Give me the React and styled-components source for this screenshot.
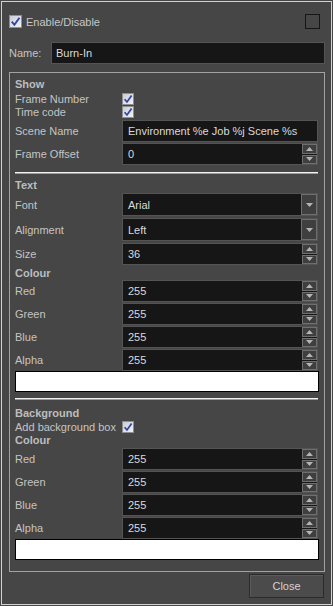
import React from "react";
import styled, { createGlobalStyle } from "styled-components";

const GlobalStyle = createGlobalStyle`
  html, body { margin: 0; padding: 0; background: #464646; }
  body { font-family: "Liberation Sans", Arial, sans-serif; font-size: 11px; color: #c4c4c4; }
  * { box-sizing: border-box; }
`;

const Window = styled.div`
  width: 333px;
  height: 606px;
  padding: 1px;
  background: #464646;
`;

const Frame = styled.div`
  height: 100%;
  border: 1px solid #d2d2d2;
  padding: 0 6px 0 7px;
  display: flex;
  flex-direction: column;
`;

const TopRow = styled.div`
  margin-top: 12px;
  height: 15px;
  display: flex;
  align-items: center;
  justify-content: space-between;
  padding-right: 5px;
`;

const CheckLabel = styled.label`
  display: flex;
  align-items: center;
  gap: 4px;
  font-size: 11px;
  color: #c6c6c6;
`;

const EmptyBox = styled.div`
  width: 15px;
  height: 15px;
  border: 1px solid #161616;
`;

const BoxWrap = styled.span`
  display: inline-flex;
  width: ${(p) => p.$size}px;
  height: ${(p) => p.$size}px;
  border: 1px solid #8e8e8e;
  background: linear-gradient(135deg, #c9cbd8 0%, #f2f2f4 100%);
  align-items: center;
  justify-content: center;
`;

const Check = ({ size = 12 }) => (
  <BoxWrap $size={size}>
    <svg width={size - 2} height={size - 2} viewBox="0 0 10 10">
      <path d="M1.6 5.2 L4 8 L8.6 1.6" fill="none" stroke="#2f43a3" strokeWidth="1.7" />
    </svg>
  </BoxWrap>
);

const NameRow = styled.div`
  margin-top: 13px;
  display: flex;
  align-items: center;
  height: 22px;
`;

const NameLabel = styled.span`
  width: 42px;
  color: #c4c4c4;
`;

const TextBox = styled.div`
  flex: 1;
  height: 100%;
  background: #161616;
  border: 1px solid #545454;
  color: #dadada;
  display: flex;
  align-items: center;
  padding-left: 4px;
  font-size: 11px;
`;

const GroupBox = styled.div`
  margin-top: 8px;
  border: 1px solid #a2a2a2;
  padding: 4px 6px 11px 5px;
  display: flex;
  flex-direction: column;
`;

const Title = styled.div`
  height: 14px;
  line-height: 14px;
  font-weight: bold;
  color: #bdbdbd;
  margin-top: ${(p) => p.$mt || 0}px;
`;

const CheckRow = styled.div`
  height: 13px;
  display: flex;
  align-items: center;
  margin-top: ${(p) => p.$mt || 0}px;
`;

const RowLabel = styled.span`
  width: 107px;
  flex: none;
  color: #c4c4c4;
  white-space: nowrap;
`;

const FieldRow = styled.div`
  height: ${(p) => p.$h || 22}px;
  display: flex;
  align-items: stretch;
  margin-top: ${(p) => p.$mt || 0}px;
`;

const FieldLabel = styled.span`
  width: 107px;
  flex: none;
  color: #c4c4c4;
  display: flex;
  align-items: center;
`;

const Field = styled.div`
  flex: 1;
  display: flex;
  background: #161616;
  border: 1px solid #545454;
`;

const FieldText = styled.div`
  flex: 1;
  display: flex;
  align-items: center;
  padding-left: 5px;
  color: #dadada;
`;

const SpinCol = styled.div`
  width: 15px;
  display: flex;
  flex-direction: column;
  gap: 1px;
  background: #161616;
`;

const SpinBtn = styled.div`
  flex: 1;
  border: 1px solid #6f6f6f;
  background: #3f3f3f;
  display: flex;
  align-items: center;
  justify-content: center;
`;

const DropBtn = styled.div`
  width: 16px;
  border: 1px solid #6f6f6f;
  background: #3f3f3f;
  display: flex;
  align-items: center;
  justify-content: center;
`;

const Tri = ({ up }) => (
  <svg width="7" height="4" viewBox="0 0 7 4">
    <path d={up ? "M0 4 L3.5 0 L7 4 Z" : "M0 0 L7 0 L3.5 4 Z"} fill="#b4b4b4" />
  </svg>
);

const Separator = styled.div`
  height: 2px;
  margin-top: ${(p) => p.$mt || 0}px;
  border-top: 1px solid #f2f2f2;
  border-bottom: 1px solid #9c9c9c;
`;

const Swatch = styled.div`
  height: 21px;
  background: #ffffff;
  border: 1px solid #000000;
  margin-right: -1px;
`;

const Footer = styled.div`
  margin-top: 2px;
  display: flex;
  justify-content: flex-end;
  padding-right: 1px;
`;

const CloseButton = styled.button`
  width: 75px;
  height: 24px;
  background: #4b4b4b;
  border: 1px solid #2b2b2b;
  box-shadow: inset 1px 1px 0 #5a5a5a;
  color: #d4d4d4;
  font-family: "Liberation Sans", Arial, sans-serif;
  font-size: 11px;
  padding: 0;
`;

const Spin = ({ label, value, mt }) => (
  <FieldRow $mt={mt}>
    <FieldLabel>{label}</FieldLabel>
    <Field>
      <FieldText>{value}</FieldText>
      <SpinCol>
        <SpinBtn><Tri up /></SpinBtn>
        <SpinBtn><Tri /></SpinBtn>
      </SpinCol>
    </Field>
  </FieldRow>
);

const Select = ({ label, value, mt }) => (
  <FieldRow $mt={mt} $h={23}>
    <FieldLabel>{label}</FieldLabel>
    <Field>
      <FieldText>{value}</FieldText>
      <DropBtn><Tri /></DropBtn>
    </Field>
  </FieldRow>
);

const Text = ({ label, value, mt }) => (
  <FieldRow $mt={mt}>
    <FieldLabel>{label}</FieldLabel>
    <Field>
      <FieldText>{value}</FieldText>
    </Field>
  </FieldRow>
);

const ColourBlock = ({ mt }) => (
  <>
    <Spin label="Red" value="255" mt={mt} />
    <Spin label="Green" value="255" mt={1} />
    <Spin label="Blue" value="255" mt={1} />
    <Spin label="Alpha" value="255" mt={1} />
    <Swatch />
  </>
);

export default function App() {
  return (
    <Window>
      <GlobalStyle />
      <Frame>
        <TopRow>
          <CheckLabel>
            <Check size={13} />
            Enable/Disable
          </CheckLabel>
          <EmptyBox />
        </TopRow>
        <NameRow>
          <NameLabel>Name:</NameLabel>
          <TextBox>Burn-In</TextBox>
        </NameRow>
        <GroupBox>
          <Title>Show</Title>
          <CheckRow $mt={1}>
            <RowLabel>Frame Number</RowLabel>
            <Check />
          </CheckRow>
          <CheckRow>
            <RowLabel>Time code</RowLabel>
            <Check />
          </CheckRow>
          <Text label="Scene Name" value="Environment %e Job %j Scene %s" mt={2} />
          <Spin label="Frame Offset" value="0" mt={1} />
          <Separator $mt={7} />
          <Title $mt={4}>Text</Title>
          <Select label="Font" value="Arial" mt={1} />
          <Select label="Alignment" value="Left" mt={2} />
          <Spin label="Size" value="36" mt={2} />
          <Title $mt={1}>Colour</Title>
          <ColourBlock mt={0} />
          <Separator $mt={6} />
          <Title $mt={6}>Background</Title>
          <CheckRow>
            <RowLabel>Add background box</RowLabel>
            <Check />
          </CheckRow>
          <Title>Colour</Title>
          <ColourBlock mt={1} />
        </GroupBox>
        <Footer>
          <CloseButton>Close</CloseButton>
        </Footer>
      </Frame>
    </Window>
  );
}
